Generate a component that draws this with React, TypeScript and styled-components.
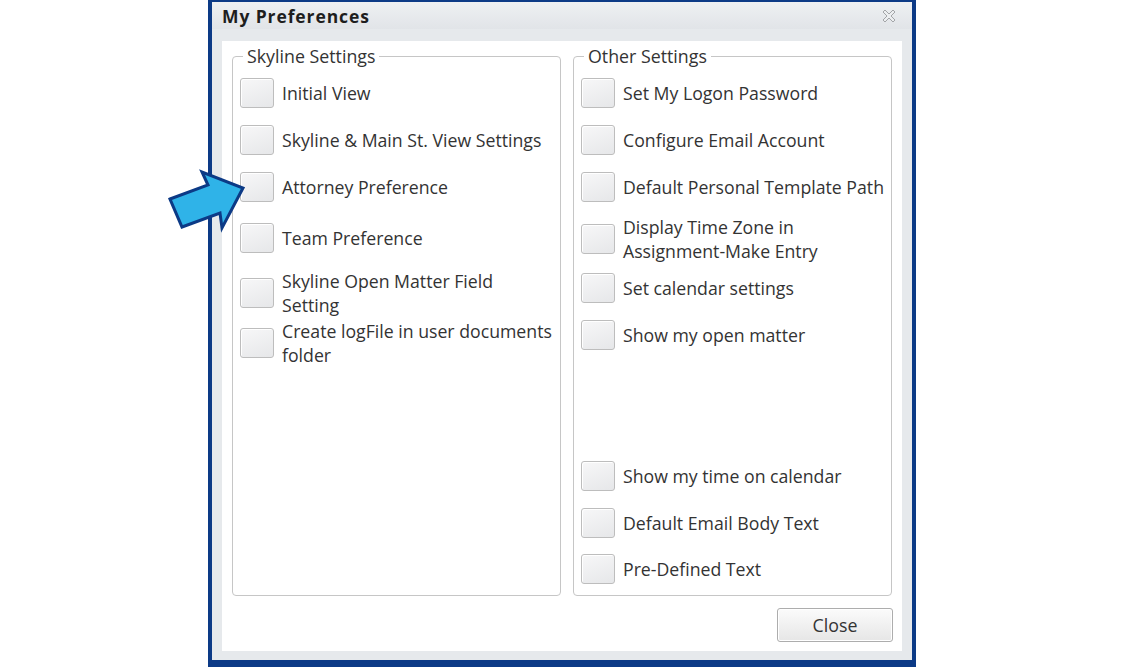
import React from 'react';
import styled, { createGlobalStyle } from 'styled-components';

const GlobalStyle = createGlobalStyle`
  html, body {
    margin: 0;
    padding: 0;
    background: #ffffff;
  }
  body {
    font-family: 'Open Sans', 'Liberation Sans', sans-serif;
    color: #333333;
  }
`;

const Page = styled.div`
  position: relative;
  width: 1123px;
  height: 667px;
  padding-left: 208px;
  box-sizing: border-box;
  overflow: hidden;
`;

const Dialog = styled.div`
  width: 708px;
  height: 667px;
  box-sizing: border-box;
  border: 4px solid #0c3a86;
  border-top-width: 2px;
  border-bottom-width: 7px;
  background: #eceef1;
  display: flex;
  flex-direction: column;
`;

const TitleBar = styled.div`
  height: 27px;
  flex: 0 0 27px;
  display: flex;
  align-items: center;
  justify-content: space-between;
  padding: 0 16px 0 10px;
  background: linear-gradient(#eef0f2, #e1e4e8);
`;

const Title = styled.div`
  font-size: 17.5px;
  font-weight: 700;
  color: #1e1e1e;
  letter-spacing: 0.9px;
  line-height: 22px;
`;

const Frame = styled.div`
  flex: 1;
  display: flex;
  padding: 12px 10px 9px 10px;
  background: #e6e9ec;
`;

const Panel = styled.div`
  flex: 1;
  display: flex;
  flex-direction: column;
  background: #ffffff;
  padding: 4px 10px 9px 10px;
`;

const Columns = styled.div`
  display: flex;
  gap: 12px;
  height: 551px;
`;

const GroupBox = styled.fieldset<{ $w: number }>`
  width: ${(p) => p.$w}px;
  box-sizing: border-box;
  margin: 0;
  padding: 0 7px;
  border: 1px solid #c6c6c6;
  border-radius: 4px;
  display: flex;
  flex-direction: column;
  min-width: 0;
`;

const Legend = styled.legend`
  font-size: 17.8px;
  line-height: 22px;
  padding: 0 4px;
  margin-left: 3px;
  color: #333333;
`;

const Row = styled.div<{ $mt: number }>`
  display: flex;
  align-items: center;
  gap: 8px;
  margin-top: ${(p) => p.$mt}px;
  min-height: 30px;
`;

const Box = styled.div`
  flex: 0 0 34px;
  width: 34px;
  height: 30px;
  box-sizing: border-box;
  border: 1px solid #bdbdbd;
  border-radius: 3px;
  background: linear-gradient(160deg, #f7f7f8, #e6e7e9);
  box-shadow: inset 1px 1px 0 #ffffff;
`;

const Label = styled.div`
  font-size: 17.7px;
  line-height: 24px;
  color: #333333;
  white-space: nowrap;
`;

const Footer = styled.div`
  display: flex;
  justify-content: flex-end;
  margin-top: 12px;
`;

const Button = styled.button`
  width: 116px;
  height: 34px;
  margin-right: -1px;
  border: 1px solid #adadad;
  border-radius: 3px;
  background: linear-gradient(#fbfbfb, #e6e6e6);
  box-shadow: inset 0 0 0 1px #ffffff;
  font-family: 'Open Sans', 'Liberation Sans', sans-serif;
  font-size: 17.8px;
  color: #333333;
  padding: 0;
`;

const ArrowMark = styled.svg`
  position: absolute;
  left: 160px;
  top: 160px;
  width: 100px;
  height: 80px;
  overflow: visible;
`;

type Item = { text: React.ReactNode; mt: number };

const LEFT: Item[] = [
  { text: 'Initial View', mt: 11 },
  { text: 'Skyline & Main St. View Settings', mt: 17 },
  { text: 'Attorney Preference', mt: 17 },
  { text: 'Team Preference', mt: 21 },
  { text: <>Skyline Open Matter Field<br />Setting</>, mt: 16 },
  { text: <>Create logFile in user documents<br />folder</>, mt: 2 },
];

const RIGHT: Item[] = [
  { text: 'Set My Logon Password', mt: 11 },
  { text: 'Configure Email Account', mt: 17 },
  { text: 'Default Personal Template Path', mt: 17 },
  { text: <>Display Time Zone in<br />Assignment-Make Entry</>, mt: 13 },
  { text: 'Set calendar settings', mt: 10 },
  { text: 'Show my open matter', mt: 17 },
  { text: 'Show my time on calendar', mt: 111 },
  { text: 'Default Email Body Text', mt: 17 },
  { text: 'Pre-Defined Text', mt: 16 },
];

const CloseIcon = () => (
  <svg width="14" height="14" viewBox="0 0 14 14">
    <polygon
      points="1,3 3,1 7,5 11,1 13,3 9,7 13,11 11,13 7,9 3,13 1,11 5,7"
      fill="#eceef0"
      stroke="#a3a5a8"
      strokeWidth="1"
      strokeLinejoin="miter"
    />
  </svg>
);

export default function App() {
  return (
    <>
      <GlobalStyle />
      <Page>
        <Dialog>
          <TitleBar>
            <Title>My Preferences</Title>
            <CloseIcon />
          </TitleBar>
          <Frame>
            <Panel>
              <Columns>
                <GroupBox $w={329}>
                  <Legend>Skyline Settings</Legend>
                  {LEFT.map((it, i) => (
                    <Row key={i} $mt={it.mt}>
                      <Box />
                      <Label>{it.text}</Label>
                    </Row>
                  ))}
                </GroupBox>
                <GroupBox $w={319}>
                  <Legend>Other Settings</Legend>
                  {RIGHT.map((it, i) => (
                    <Row key={i} $mt={it.mt}>
                      <Box />
                      <Label>{it.text}</Label>
                    </Row>
                  ))}
                </GroupBox>
              </Columns>
              <Footer>
                <Button>Close</Button>
              </Footer>
            </Panel>
          </Frame>
        </Dialog>
        <ArrowMark viewBox="0 0 100 80">
          <polygon
            points="10,39 48,25 42,12 83,28 62,68 60,53 22,67"
            fill="#2fb3e8"
            stroke="#0c3a86"
            strokeWidth="3"
            strokeLinejoin="miter"
          />
        </ArrowMark>
      </Page>
    </>
  );
}
